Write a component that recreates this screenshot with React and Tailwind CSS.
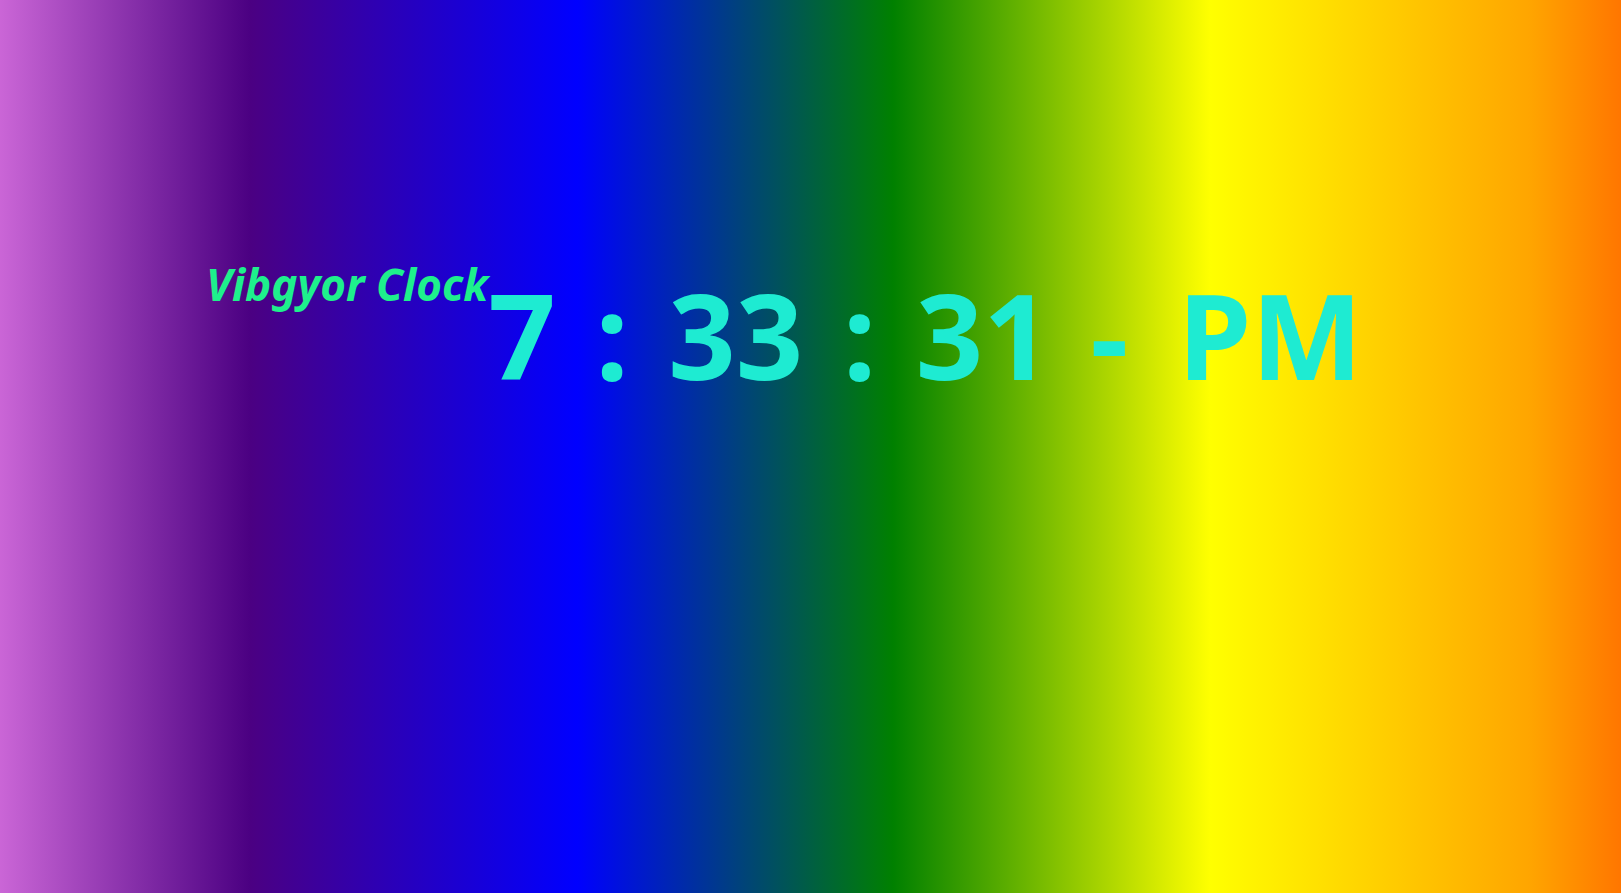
export default function App() {
  return (
    <div className="h-[893px] w-full overflow-hidden bg-[linear-gradient(to_right,violet_-70px,indigo_250px,blue_577px,green_893px,yellow_1210px,orange_1530px,red_1850px)] font-['Noto_Sans','Open_Sans',sans-serif]">
      <div className="flex items-start pl-[206px] pt-[248px]">
        <h1 className="mt-[8px] text-[44px] leading-[1.3] font-bold italic text-[#1ef08c]">Vibgyor Clock</h1>
        <div className="mt-[10px] text-[118px] leading-[1.3] font-bold text-[#1eebd2] whitespace-pre [word-spacing:9px]">
          7 : 33 : 31 <span className="mr-[10px]">-</span> PM
        </div>
      </div>
    </div>
  )
}
